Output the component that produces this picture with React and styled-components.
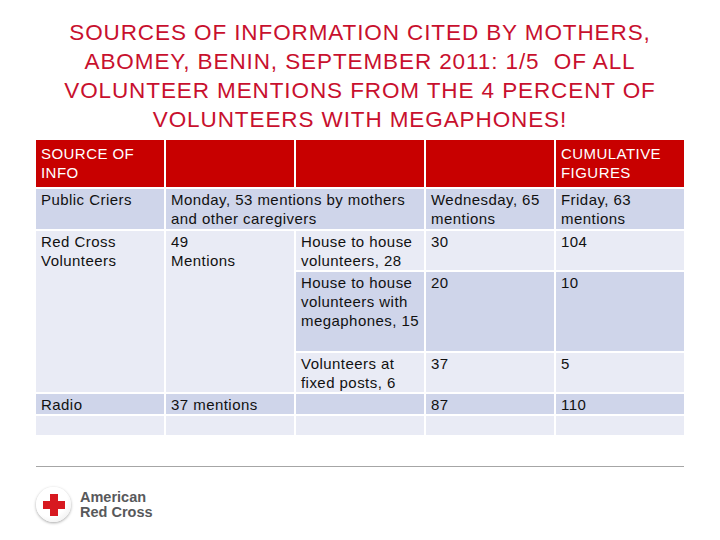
import React from "react"
import styled, { createGlobalStyle } from "styled-components"

const GlobalStyle = createGlobalStyle`
	html, body {
		margin: 0;
		padding: 0;
		background: #fff;
	}
	body {
		font-family: "Liberation Sans", Arial, sans-serif;
	}
`

const cells = [
	{ text: "SOURCE OF INFO", col: "1", row: "1", tone: "head" },
	{ text: "", col: "2", row: "1", tone: "head" },
	{ text: "", col: "3", row: "1", tone: "head" },
	{ text: "", col: "4", row: "1", tone: "head" },
	{ text: "CUMULATIVE FIGURES", col: "5", row: "1", tone: "head" },

	{ text: "Public Criers", col: "1", row: "2", tone: "dark" },
	{ text: "Monday, 53 mentions by mothers and other caregivers", col: "2 / span 2", row: "2", tone: "dark" },
	{ text: "Wednesday, 65 mentions", col: "4", row: "2", tone: "dark" },
	{ text: "Friday, 63 mentions", col: "5", row: "2", tone: "dark" },

	{ text: "Red Cross Volunteers", col: "1", row: "3 / span 3", tone: "light" },
	{ text: ["49", "Mentions"], col: "2", row: "3 / span 3", tone: "light" },
	{ text: "House to house volunteers, 28", col: "3", row: "3", tone: "light" },
	{ text: "30", col: "4", row: "3", tone: "light" },
	{ text: "104", col: "5", row: "3", tone: "light" },

	{ text: "House to house volunteers with megaphones, 15", col: "3", row: "4", tone: "dark" },
	{ text: "20", col: "4", row: "4", tone: "dark" },
	{ text: "10", col: "5", row: "4", tone: "dark" },

	{ text: "Volunteers at fixed posts, 6", col: "3", row: "5", tone: "light" },
	{ text: "37", col: "4", row: "5", tone: "light" },
	{ text: "5", col: "5", row: "5", tone: "light" },

	{ text: "Radio", col: "1", row: "6", tone: "dark" },
	{ text: "37 mentions", col: "2", row: "6", tone: "dark" },
	{ text: "", col: "3", row: "6", tone: "dark" },
	{ text: "87", col: "4", row: "6", tone: "dark" },
	{ text: "110", col: "5", row: "6", tone: "dark" },

	{ text: "", col: "1", row: "7", tone: "light" },
	{ text: "", col: "2", row: "7", tone: "light" },
	{ text: "", col: "3", row: "7", tone: "light" },
	{ text: "", col: "4", row: "7", tone: "light" },
	{ text: "", col: "5", row: "7", tone: "light" },
]

const App = () => {
	return (
		<Page>
			<GlobalStyle />
			<Title>
				SOURCES OF INFORMATION CITED BY MOTHERS,
				<br />
				ABOMEY, BENIN, SEPTEMBER 2011: 1/5&nbsp; OF ALL
				<br />
				VOLUNTEER MENTIONS FROM THE 4 PERCENT OF
				<br />
				VOLUNTEERS WITH MEGAPHONES!
			</Title>
			<Table>
				{cells.map((c, i) => (
					<Cell key={i} $col={c.col} $row={c.row} $tone={c.tone}>
						{Array.isArray(c.text)
							? c.text.map((t, j) => <div key={j}>{t}</div>)
							: c.text}
					</Cell>
				))}
			</Table>
			<Footer>
				<Logo>
					<Badge>
						<svg width="22" height="22" viewBox="0 0 22 22">
							<path d="M7 0h8v7h7v8h-7v7H7v-7H0V7h7z" fill="#d71920" />
						</svg>
					</Badge>
					<LogoText>
						<span>American</span>
						<span>Red Cross</span>
					</LogoText>
				</Logo>
			</Footer>
		</Page>
	)
}

const Page = styled.div`
	width: 720px;
	height: 540px;
	box-sizing: border-box;
	padding: 18px 36px 0;
	display: flex;
	flex-direction: column;
	overflow: hidden;
`

const Title = styled.h1`
	margin: 0 -20px;
	font-family: "Liberation Sans", Arial, sans-serif;
	font-weight: 400;
	font-size: 22.5px;
	letter-spacing: 0.9px;
	line-height: 29px;
	color: #c8102e;
	text-align: center;
	white-space: nowrap;
`

const Table = styled.div`
	margin-top: 6px;
	display: grid;
	grid-template-columns: repeat(5, 128px);
	grid-template-rows: 47px 40px 39px 79px 39px 20px 19px;
	gap: 2px;
	width: 648px;
`

const toneColors = {
	head: "#c80000",
	dark: "#cfd5ea",
	light: "#e9ebf5",
}

const Cell = styled.div`
	grid-column: ${(p) => p.$col};
	grid-row: ${(p) => p.$row};
	background: ${(p) => toneColors[p.$tone]};
	color: ${(p) => (p.$tone === "head" ? "#fff" : "#111")};
	font-size: 15px;
	letter-spacing: 0.45px;
	line-height: 19px;
	padding: 0 4px 0 5px;
	padding-top: ${(p) => (p.$tone === "head" ? "4px" : "1px")};
	overflow: hidden;
`

const Footer = styled.div`
	margin-top: 31px;
	border-top: 1px solid #a6a6a6;
	padding-top: 20px;
`

const Logo = styled.div`
	display: flex;
	align-items: center;
	gap: 9px;
`

const Badge = styled.div`
	width: 35px;
	height: 35px;
	border-radius: 50%;
	background: radial-gradient(circle at 40% 35%, #ffffff 55%, #e6e6e6 100%);
	box-shadow: 0 1px 3px rgba(0, 0, 0, 0.35);
	display: flex;
	align-items: center;
	justify-content: center;
`

const LogoText = styled.div`
	display: flex;
	flex-direction: column;
	font-family: "Liberation Sans", Arial, sans-serif;
	font-weight: 700;
	font-size: 14.5px;
	line-height: 15px;
	color: #58595b;
	letter-spacing: 0;
`

export default App
